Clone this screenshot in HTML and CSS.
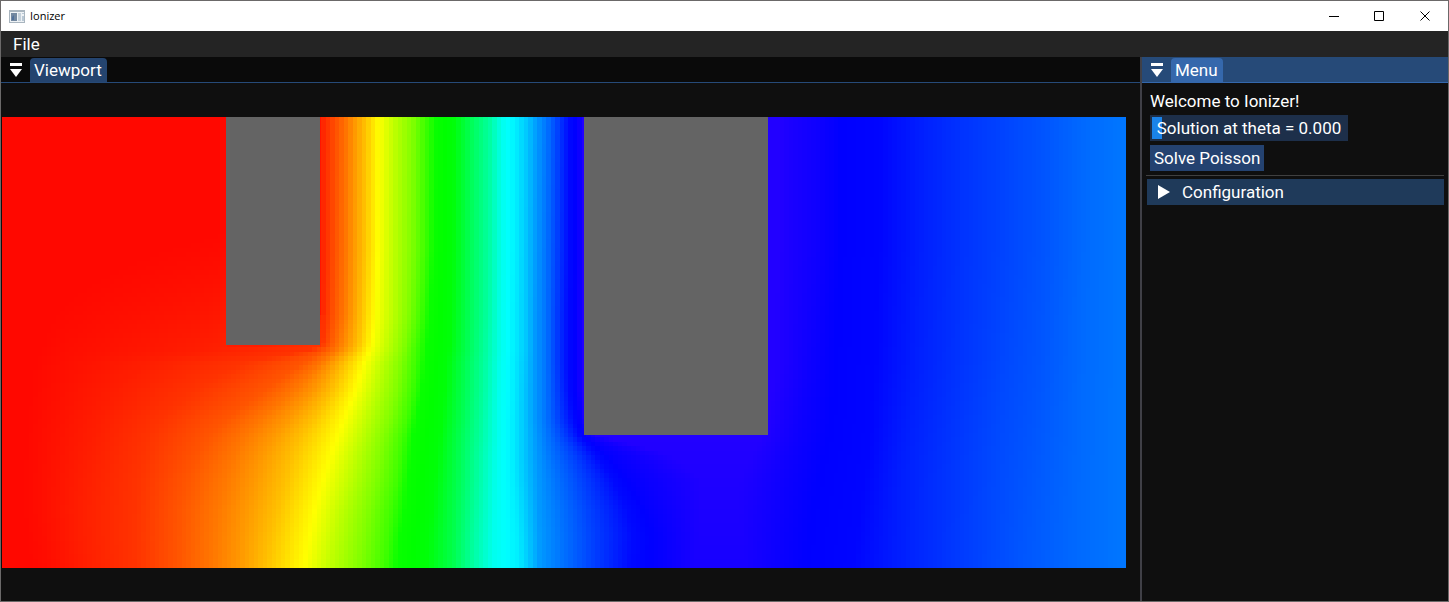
FILE: index.html
```html
<!DOCTYPE html>
<html lang="en">
<head>
<meta charset="utf-8">
<title>Ionizer</title>
<link rel="stylesheet" href="styles.css">
</head>
<body>
<div class="window">
  <header class="titlebar">
    <svg class="app-icon" width="16" height="13" viewBox="0 0 16 13" aria-hidden="true">
      <rect width="16" height="13" fill="#a9b5bf"/>
      <rect x="1" y="2" width="14" height="10" fill="#eef2f5"/>
      <rect x="2" y="3" width="6" height="8" fill="#7388a0"/>
      <path d="M3 10V7l2-2v5z" fill="#50709a"/>
      <rect x="9" y="3" width="3" height="8" fill="#c4d0da"/>
      <path d="M13 3h2v1h-2zm0 3h2v5h-2z" fill="#b9c8d5"/>
    </svg>
    <h1 class="app-title">Ionizer</h1>
    <div class="window-controls">
      <button type="button" aria-label="Minimize"><svg width="11" height="11" viewBox="0 0 11 11"><path d="M1 5.500h10" /></svg></button>
      <button type="button" aria-label="Maximize"><svg width="11" height="11" viewBox="0 0 11 11"><path d="M.5 .5h9v9h-9z"/></svg></button>
      <button type="button" aria-label="Close"><svg width="11" height="11" viewBox="0 0 11 11"><path d="M.5 .5l9 9M9.500 .5l-9 9"/></svg></button>
    </div>
  </header>
  <nav class="menubar"><button type="button">File</button></nav>
  <main class="dock">
    <section class="panel viewport-panel">
      <div class="tabs">
        <button class="tab-list" type="button" aria-label="Viewport tab list"><svg width="12" height="14" viewBox="0 0 12 14"><path d="M0 0h12v3H0zM0 6h12L6 14z"/></svg></button>
        <button class="tab" type="button">Viewport</button>
      </div>
      <div class="viewport-body">
        <canvas class="field" id="field" width="1124" height="451" aria-label="Potential field"></canvas>
      </div>
    </section>
    <section class="panel menu-panel">
      <div class="tabs">
        <button class="tab-list" type="button" aria-label="Menu tab list"><svg width="12" height="14" viewBox="0 0 12 14"><path d="M0 0h12v3H0zM0 6h12L6 14z"/></svg></button>
        <button class="tab" type="button">Menu</button>
      </div>
      <div class="menu-body">
        <p class="welcome">Welcome to Ionizer!</p>
        <div class="slider">
          <input type="range" id="theta" min="0" max="1" step="0.001" value="0">
          <label for="theta">Solution at theta = 0.000</label>
        </div>
        <button class="solve" type="button">Solve Poisson</button>
        <hr class="separator">
        <details class="config">
          <summary><svg width="12" height="14" viewBox="0 0 12 14" aria-hidden="true"><path d="M0 0l12 7L0 14z"/></svg>Configuration</summary>
        </details>
      </div>
    </section>
  </main>
</div>
<script src="field.js"></script>
</body>
</html>
```
FILE: styles.css
```css
* {
  box-sizing: border-box;
}

body {
  margin: 0;
  font: 17px/26px Roboto, "Liberation Sans", sans-serif;
  color: #fff;
}

button {
  border: 0;
  padding: 0;
  background: none;
  color: inherit;
  font: inherit;
}

.window {
  display: flex;
  flex-direction: column;
  min-height: 100vh;
  border: 1px solid #6b6969;
  background: #0f0f0f;
}

.titlebar {
  display: flex;
  align-items: center;
  height: 30px;
  padding-left: 8px;
  gap: 5px;
  background: #fff;
  color: #000;
}

.app-title {
  margin: 0;
  font: 11px/16px "Open Sans", "Noto Sans", sans-serif;
}

.window-controls {
  display: flex;
  margin-left: auto;
}

.window-controls button {
  display: grid;
  place-items: center;
  width: 46px;
  height: 28px;
}

.window-controls path {
  fill: none;
  stroke: #000;
}

.menubar {
  height: 26px;
  padding-left: 12px;
  background: #242424;
}

.dock {
  display: flex;
  flex: 1;
}

.panel {
  display: flex;
  flex-direction: column;
}

.viewport-panel {
  flex: 1;
  min-width: 0;
}

.menu-panel {
  width: 308px;
  border-left: 2px solid #404047;
}

.tabs {
  display: flex;
  align-items: flex-end;
  height: 26px;
  padding-left: 9px;
  gap: 8px;
  border-bottom: 1px solid #264a78;
  background: #0a0a0a;
}

.menu-panel .tabs {
  border-color: #3468ad;
  background: #264a78;
}

.tab-list {
  display: flex;
  align-self: center;
}

.tab-list path,
.config path {
  fill: #fff;
}

.tab {
  height: 24px;
  padding: 0 5px 0 4px;
  border-radius: 4px 4px 0 0;
  background: #24446f;
  line-height: 24px;
}

.menu-panel .tab {
  background: #3568ac;
}

.viewport-body {
  display: flex;
  flex: 1;
  align-items: center;
  padding: 0 14px 0 1px;
}

.field {
  width: 100%;
  aspect-ratio: 1124 / 451;
  image-rendering: pixelated;
}

.menu-body {
  display: flex;
  flex-direction: column;
  align-items: flex-start;
  padding: 5px 4px;
}

.welcome {
  margin: 0 4px 1px;
}

.slider {
  display: grid;
  width: 198px;
  height: 26px;
  margin: 0 4px 4px;
  background: #1d2f4a;
}

.slider input,
.slider label {
  grid-area: 1 / 1;
}

.slider label {
  text-align: center;
  pointer-events: none;
  z-index: 1;
}

.slider input {
  width: 100%;
  height: 26px;
  margin: 0;
  padding: 0 2px;
  appearance: none;
  background: none;
}

.slider input::-webkit-slider-thumb {
  appearance: none;
  width: 10px;
  height: 22px;
  background: #1a83ea;
}

.solve {
  margin: 0 4px;
  padding: 0 4px;
  background: #244270;
}

.separator {
  width: 100%;
  height: 1px;
  margin: 4px 0 3px;
  border: 0;
  background: #404040;
}

.config {
  align-self: stretch;
  margin-left: 1px;
}

.config summary {
  display: flex;
  align-items: center;
  gap: 12px;
  padding-left: 11px;
  background: #1f3a5a;
  list-style: none;
}
```
FILE: field.js
```js
// Equipotential contours: each row of the table gives, for one height,
// where the potential passes each value in HUES.
const HUES = [0, 3, 7, 12, 20, 28, 36, 45, 60, 75, 90, 105, 118, 122, 138, 158,
  176, 184, 194, 204, 213, 225, 238, 241, 248,
  248, 246, 243, 240, 239, 233, 228, 223, 220, 215, 212];

const TOP_RIGHT = [778, 792, 820, 841, 879, 920, 963, 1015, 1045, 1085, 1126];

const ROWS = [
  [117, 0, 317, 321, 327, 337, 347, 355, 365, 379, 394, 413, 425, 436, 454, 469, 490, 502, 516, 528, 537, 547, 558, 569, 578, 584, ...TOP_RIGHT],
  [250, 0, 317, 321, 327, 336, 346, 354, 364, 378, 393, 412, 425, 434, 453, 468, 489, 502, 516, 527, 536, 546, 557, 569, 578, 584, ...TOP_RIGHT],
  [315, 0, 317, 321, 326, 334, 344, 352, 361, 375, 392, 409, 421, 430, 451, 467, 488, 501, 515, 527, 535, 546, 556, 568, 577, 584, 776, 790, 814, 837, 876, 917, 961, 1010, 1042, 1083, 1126],
  [344, 0, 100, 270, 322, 330, 339, 348, 358, 372, 388, 405, 417, 427, 450, 466, 486, 501, 515, 527, 535, 546, 556, 568, 577, 584, 776, 790, 812, 836, 876, 916, 960, 1008, 1041, 1083, 1126],
  [350, 0, 64, 205, 310, 324, 336, 345, 355, 370, 387, 404, 416, 427, 449, 466, 486, 501, 515, 527, 535, 546, 556, 568, 577, 584, 776, 790, 811, 835, 875, 915, 960, 1007, 1041, 1083, 1126],
  [363, 0, 55, 145, 243, 303, 321, 332, 344, 364, 382, 401, 415, 425, 447, 464, 485, 500, 514, 526, 535, 546, 556, 568, 577, 584, 776, 790, 810, 835, 875, 915, 959, 1006, 1040, 1083, 1126],
  [390, 0, 49, 118, 195, 265, 295, 315, 332, 356, 376, 397, 412, 422, 445, 463, 484, 499, 514, 525, 535, 546, 557, 569, 577, 584, 773, 786, 805, 833, 872, 912, 956, 1002, 1038, 1082, 1126],
  [420, 0, 44, 100, 160, 225, 260, 288, 312, 344, 367, 390, 407, 416, 442, 461, 482, 498, 513, 525, 535, 546, 559, 573, 580, 586, 766, 780, 801, 831, 871, 908, 952, 998, 1034, 1082, 1126],
  [436, 0, 41, 95, 149, 209, 245, 274, 301, 338, 362, 385, 403, 413, 440, 459, 481, 498, 513, 525, 536, 548, 564, 579, 584, 600, 762, 776, 798, 828, 870, 906, 950, 996, 1032, 1082, 1126],
  [455, 0, 40, 89, 143, 198, 234, 263, 292, 331, 356, 381, 400, 411, 438, 458, 479, 497, 513, 525, 537, 551, 574, 596, 610, 675, 748, 766, 792, 824, 868, 903, 948, 994, 1030, 1081, 1126],
  [480, 0, 39, 83, 138, 187, 225, 255, 285, 323, 350, 376, 397, 408, 435, 457, 478, 496, 514, 526, 538, 556, 583, 613, 632, 712, 730, 754, 785, 818, 864, 901, 946, 993, 1027, 1081, 1126],
  [510, 0, 39, 79, 136, 180, 217, 247, 277, 315, 341, 369, 391, 405, 432, 455, 476, 495, 516, 528, 539, 560, 590, 627, 650, 715, 720, 745, 779, 812, 860, 900, 946, 992, 1024, 1080, 1126],
  [535, 0, 42, 80, 135, 179, 214, 243, 271, 310, 336, 365, 388, 400, 429, 454, 474, 494, 518, 529, 540, 562, 593, 633, 659, 715, 718, 742, 775, 809, 857, 900, 945, 991, 1022, 1080, 1126],
  [568, 0, 50, 85, 136, 178, 212, 240, 265, 304, 330, 360, 384, 397, 427, 453, 473, 493, 519, 530, 540, 562, 593, 630, 660, 715, 717, 738, 772, 806, 853, 900, 945, 990, 1020, 1080, 1126]
];

// Electrodes in the same units as the contour table: x, y, width, height.
const ELECTRODES = [[226, 117, 94, 228], [584, 117, 184, 318]];

const COLUMNS = 250;
const LINES = 100;
const ORIGIN = [2, 117];

const canvas = document.getElementById("field");
const ctx = canvas.getContext("2d");

function contoursAt(y) {
  let i = 0;
  while (i < ROWS.length - 2 && y > ROWS[i + 1][0]) i++;
  const a = ROWS[i];
  const b = ROWS[i + 1];
  const t = (y - a[0]) / (b[0] - a[0]);
  return HUES.map((_, k) => a[k + 1] + (b[k + 1] - a[k + 1]) * t);
}

function interpolate(x, xs) {
  let k = 0;
  while (k < xs.length - 2 && x > xs[k + 1]) k++;
  const t = (x - xs[k]) / Math.max(1, xs[k + 1] - xs[k]);
  return HUES[k] + (HUES[k + 1] - HUES[k]) * Math.min(1, t);
}

const leakContours = contoursAt(350);

function hueAt(x, y, xs) {
  if (y < 350 && x < 226) {
    // Faint leak of the potential to the left of the first electrode.
    const depth = (y - 117) / 233;
    return Math.max(2, interpolate(x, leakContours) * Math.pow(depth, 2));
  }
  // The peak below the second electrode flattens toward the bottom edge.
  const cap = y > 435 ? 248 - (y - 435) / 50 : 248;
  return Math.max(2, Math.min(cap, interpolate(x, xs)));
}

for (let row = 0; row < LINES; row++) {
  const top = Math.round(row * canvas.height / LINES);
  const bottom = Math.round((row + 1) * canvas.height / LINES);
  const y = ORIGIN[1] + (top + bottom) / 2;
  const xs = contoursAt(y);
  for (let col = 0; col < COLUMNS; col++) {
    const left = Math.round(col * canvas.width / COLUMNS);
    const right = Math.round((col + 1) * canvas.width / COLUMNS);
    const x = ORIGIN[0] + (left + right) / 2;
    ctx.fillStyle = `hsl(${hueAt(x, y, xs)} 100% 50%)`;
    ctx.fillRect(left, top, right - left, bottom - top);
  }
}

ctx.fillStyle = "#646464";
for (const [x, y, w, h] of ELECTRODES) {
  ctx.fillRect(x - ORIGIN[0], y - ORIGIN[1], w, h);
}
```
